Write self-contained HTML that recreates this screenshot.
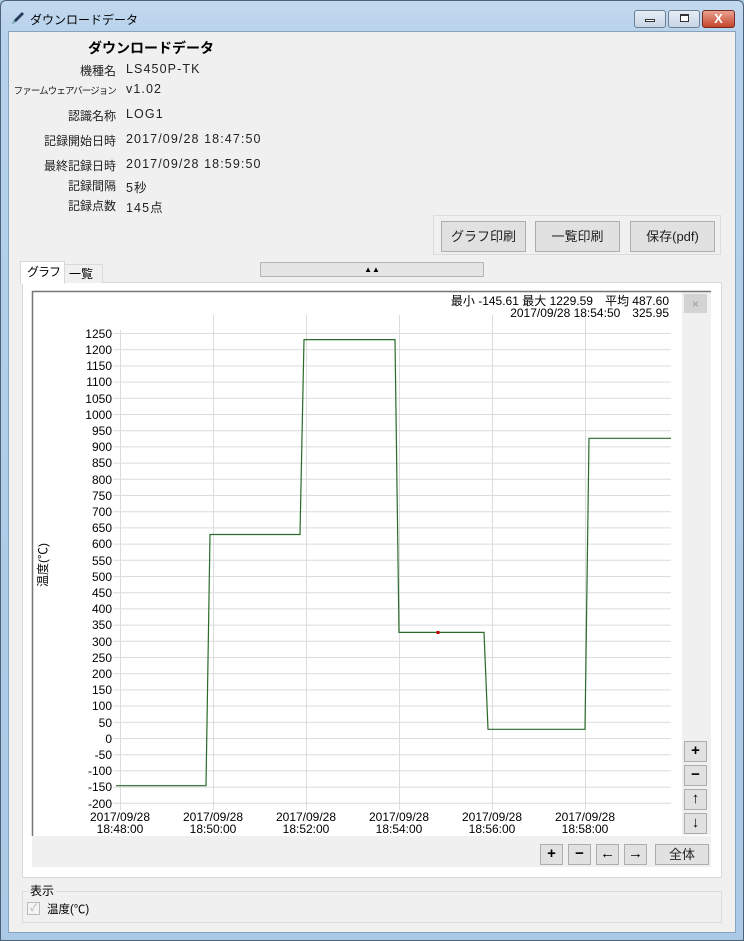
<!DOCTYPE html>
<html><head><meta charset="utf-8">
<style>
*{box-sizing:border-box;margin:0;padding:0}
body{width:744px;height:941px;overflow:hidden;background:#a9cbe6;font-family:"Liberation Sans","Noto Sans CJK JP",sans-serif;font-size:12px;color:#000;position:relative;white-space:nowrap}
.frame{position:absolute;left:0;top:0;width:744px;height:941px;background:linear-gradient(#c3d9ee,#b5d1ec 40px,#a9c9e6);border:1px solid #4d6277;border-radius:6px 6px 0 0}
.title{position:absolute;left:30px;top:11px;font-size:12px;color:#000}
.client{position:absolute;left:8px;top:31px;width:728px;height:902px;background:#f0f0f0;border:1px solid #8aa2bb}
.abs{position:absolute}
.lbl{position:absolute;text-align:right;width:110px;left:6px;font-size:12px;color:#222}
.val{position:absolute;left:126px;font-size:12.5px;color:#222;letter-spacing:1.1px}
.btn{position:absolute;background:#e1e1e1;border:1px solid #adadad;text-align:center;font-size:13px;color:#222}
.wb{position:absolute;top:10px;height:18px;border:1px solid #6d7f93;border-radius:3px;background:linear-gradient(#e6eef7,#c7d5e5)}
.sb{position:absolute;width:23px;height:21px;background:#e1e1e1;border:1px solid #adadad;font-weight:bold;font-size:15px;text-align:center;line-height:18px}
</style></head><body>
<div class="frame"></div>
<svg class="abs" style="left:10px;top:10px" width="16" height="16"><path d="M2 14 L4 10 L12 2 L14 4 L6 12 Z" fill="#233a5a"/><path d="M2 14 L4 10 L6 12Z" fill="#7aa"/></svg>
<div class="title">ダウンロードデータ</div>
<div class="wb" style="left:634px;width:32px"><div style="position:absolute;left:10px;top:8px;width:10px;height:3px;border:1px solid #333;background:#fff"></div></div>
<div class="wb" style="left:668px;width:32px"><div style="position:absolute;left:11px;top:3px;width:9px;height:8px;border:1px solid #333;border-top-width:2px;background:#fff"></div></div>
<div class="wb" style="left:702px;width:33px;background:linear-gradient(#e8a290,#c7442c);border-color:#7a2a20;color:#fff;font-weight:bold;text-align:center;line-height:15px;font-size:13px">X</div>
<div class="client"></div>

<div class="abs" style="left:88px;top:38px;font-size:14px;font-weight:bold">ダウンロードデータ</div>
<div class="lbl" style="top:62px">機種名</div><div class="val" style="top:62px">LS450P-TK</div>
<div class="lbl" style="top:83px;font-size:9.5px;left:0;width:116px;letter-spacing:-0.9px">ファームウェアバージョン</div><div class="val" style="top:82px">v1.02</div>
<div class="lbl" style="top:107px">認識名称</div><div class="val" style="top:107px">LOG1</div>
<div class="lbl" style="top:132px">記録開始日時</div><div class="val" style="top:132px">2017/09/28 18:47:50</div>
<div class="lbl" style="top:157px">最終記録日時</div><div class="val" style="top:157px">2017/09/28 18:59:50</div>
<div class="lbl" style="top:177px">記録間隔</div><div class="val" style="top:177px">5秒</div>
<div class="lbl" style="top:197px">記録点数</div><div class="val" style="top:197px">145点</div>

<div class="abs" style="left:433px;top:215px;width:288px;height:40px;border:1px solid #dcdcdc"></div>
<div class="btn" style="left:441px;top:221px;width:85px;height:31px;line-height:29px">グラフ印刷</div>
<div class="btn" style="left:535px;top:221px;width:85px;height:31px;line-height:29px">一覧印刷</div>
<div class="btn" style="left:630px;top:221px;width:85px;height:31px;line-height:29px">保存(pdf)</div>

<div class="abs" style="left:260px;top:262px;width:224px;height:15px;background:#e5e5e5;border:1px solid #b5b5b5;text-align:center;font-size:8px;line-height:13px">▲▲</div>

<div class="abs" style="left:22px;top:282px;width:700px;height:596px;background:#fff;border:1px solid #d9d9d9"></div>
<div class="abs" style="left:64px;top:264px;width:39px;height:19px;background:#f0f0f0;border:1px solid #d9d9d9;border-bottom:none;font-size:12px;padding-left:4px;line-height:18px">一覧</div>
<div class="abs" style="left:20px;top:261px;width:45px;height:23px;background:#fff;border:1px solid #d9d9d9;border-bottom:none;font-size:12px;padding-left:6px;line-height:20px;letter-spacing:-1px">グラフ</div>

<svg class="abs" style="left:0;top:0" width="744" height="941" font-family="Liberation Sans, Noto Sans CJK JP, sans-serif" font-size="12">
<rect x="32" y="291" width="679" height="576" fill="#fff"/>
<rect x="682" y="292" width="29" height="543" fill="#f0f0f0"/>
<rect x="32" y="836" width="679" height="31" fill="#f0f0f0"/>
<rect x="684" y="294" width="23" height="19" fill="#d3d3d3"/>
<text x="695.5" y="308" font-size="12" fill="#999" text-anchor="middle">×</text>
<line x1="32" y1="291.5" x2="711" y2="291.5" stroke="#777" stroke-width="1.5"/>
<line x1="32.5" y1="291" x2="32.5" y2="836" stroke="#777" stroke-width="1.5"/>
<g stroke="#dcdcdc" stroke-width="1">
<line x1="113" y1="333.5" x2="671" y2="333.5"/><line x1="113" y1="349.7" x2="671" y2="349.7"/><line x1="113" y1="365.9" x2="671" y2="365.9"/><line x1="113" y1="382.1" x2="671" y2="382.1"/><line x1="113" y1="398.3" x2="671" y2="398.3"/><line x1="113" y1="414.5" x2="671" y2="414.5"/><line x1="113" y1="430.7" x2="671" y2="430.7"/><line x1="113" y1="446.9" x2="671" y2="446.9"/><line x1="113" y1="463.1" x2="671" y2="463.1"/><line x1="113" y1="479.3" x2="671" y2="479.3"/><line x1="113" y1="495.5" x2="671" y2="495.5"/><line x1="113" y1="511.7" x2="671" y2="511.7"/><line x1="113" y1="527.9" x2="671" y2="527.9"/><line x1="113" y1="544.1" x2="671" y2="544.1"/><line x1="113" y1="560.3" x2="671" y2="560.3"/><line x1="113" y1="576.5" x2="671" y2="576.5"/><line x1="113" y1="592.7" x2="671" y2="592.7"/><line x1="113" y1="608.9" x2="671" y2="608.9"/><line x1="113" y1="625.1" x2="671" y2="625.1"/><line x1="113" y1="641.3" x2="671" y2="641.3"/><line x1="113" y1="657.5" x2="671" y2="657.5"/><line x1="113" y1="673.7" x2="671" y2="673.7"/><line x1="113" y1="689.9" x2="671" y2="689.9"/><line x1="113" y1="706.1" x2="671" y2="706.1"/><line x1="113" y1="722.3" x2="671" y2="722.3"/><line x1="113" y1="738.5" x2="671" y2="738.5"/><line x1="113" y1="754.7" x2="671" y2="754.7"/><line x1="113" y1="770.9" x2="671" y2="770.9"/><line x1="113" y1="787.1" x2="671" y2="787.1"/><line x1="113" y1="803.3" x2="671" y2="803.3"/>
<line x1="120.5" y1="330" x2="120.5" y2="810"/><line x1="213.5" y1="315" x2="213.5" y2="810"/><line x1="306.5" y1="315" x2="306.5" y2="810"/><line x1="399.5" y1="315" x2="399.5" y2="810"/><line x1="492.5" y1="315" x2="492.5" y2="810"/><line x1="585.5" y1="315" x2="585.5" y2="810"/>
</g>
<g text-anchor="end" fill="#000">
<text x="112" y="338">1250</text><text x="112" y="354">1200</text><text x="112" y="370">1150</text><text x="112" y="386">1100</text><text x="112" y="403">1050</text><text x="112" y="419">1000</text><text x="112" y="435">950</text><text x="112" y="451">900</text><text x="112" y="467">850</text><text x="112" y="484">800</text><text x="112" y="500">750</text><text x="112" y="516">700</text><text x="112" y="532">650</text><text x="112" y="548">600</text><text x="112" y="565">550</text><text x="112" y="581">500</text><text x="112" y="597">450</text><text x="112" y="613">400</text><text x="112" y="629">350</text><text x="112" y="646">300</text><text x="112" y="662">250</text><text x="112" y="678">200</text><text x="112" y="694">150</text><text x="112" y="710">100</text><text x="112" y="727">50</text><text x="112" y="743">0</text><text x="112" y="759">-50</text><text x="112" y="775">-100</text><text x="112" y="791">-150</text><text x="112" y="808">-200</text>
</g>
<g text-anchor="middle">
<text x="120" y="821">2017/09/28</text><text x="120" y="833">18:48:00</text>
<text x="213" y="821">2017/09/28</text><text x="213" y="833">18:50:00</text>
<text x="306" y="821">2017/09/28</text><text x="306" y="833">18:52:00</text>
<text x="399" y="821">2017/09/28</text><text x="399" y="833">18:54:00</text>
<text x="492" y="821">2017/09/28</text><text x="492" y="833">18:56:00</text>
<text x="585" y="821">2017/09/28</text><text x="585" y="833">18:58:00</text>
</g>
<text x="669" y="305" text-anchor="end">最小 -145.61 最大 1229.59　平均 487.60</text>
<text x="669" y="317" text-anchor="end">2017/09/28 18:54:50　325.95</text>
<text transform="translate(47,565) rotate(-90)" text-anchor="middle" font-size="12">温度(℃)</text>
<polyline fill="none" stroke="#2a6b2a" stroke-width="1.2" points="116,785.7 206,785.7 210,534.5 300,534.5 304,339.6 395,339.6 399,632.4 484,632.4 488,729.3 585,729.3 589,438.3 671,438.3"/>
<rect x="436.5" y="631" width="3" height="3" fill="#c00"/>
</svg>

<div class="sb" style="left:684px;top:741px">+</div>
<div class="sb" style="left:684px;top:765px">−</div>
<div class="sb" style="left:684px;top:789px">↑</div>
<div class="sb" style="left:684px;top:813px">↓</div>
<div class="sb" style="left:540px;top:844px">+</div>
<div class="sb" style="left:568px;top:844px">−</div>
<div class="sb" style="left:596px;top:844px">←</div>
<div class="sb" style="left:624px;top:844px">→</div>
<div class="btn" style="left:655px;top:844px;width:54px;height:21px;line-height:19px">全体</div>

<div class="abs" style="left:22px;top:891px;width:700px;height:32px;border:1px solid #dcdcdc"></div>
<div class="abs" style="left:28px;top:882px;background:#f0f0f0;padding:0 2px;font-size:12px">表示</div>
<div class="abs" style="left:27px;top:902px;width:13px;height:13px;border:1px solid #bbb;background:#f4f4f4;color:#aaa;font-size:10px;line-height:11px;text-align:center">✓</div>
<div class="abs" style="left:47px;top:901px;font-size:11.5px">温度(℃)</div>
</body></html>
